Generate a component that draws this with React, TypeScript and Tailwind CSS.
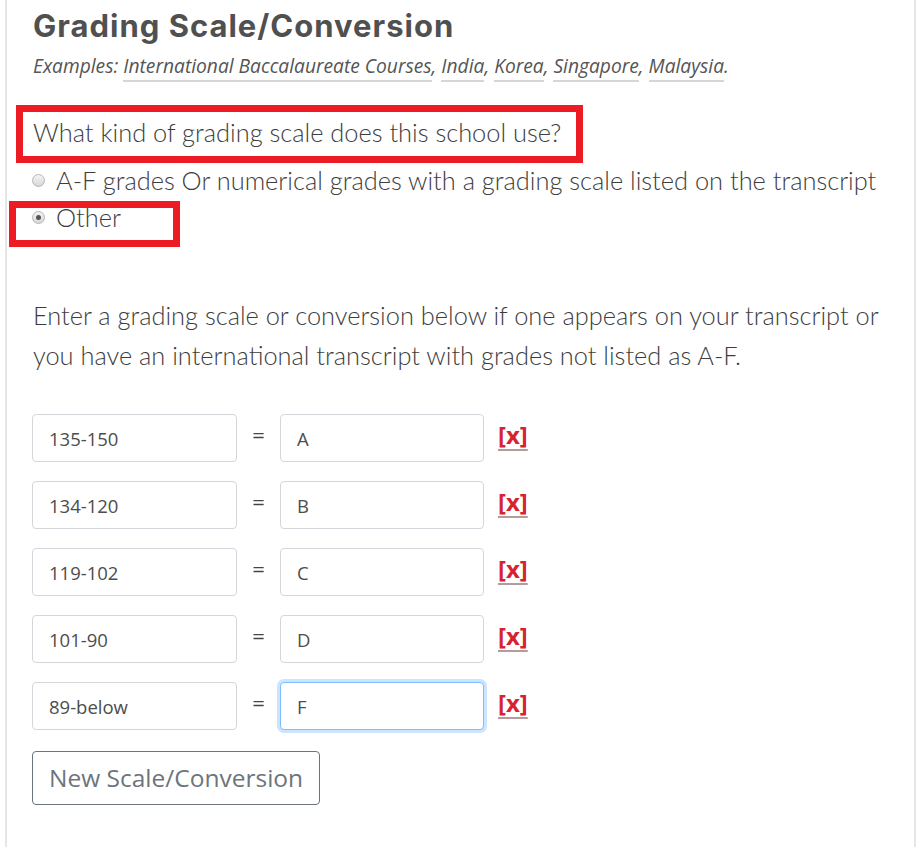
import { useState } from "react";

type ScaleRow = { id: number; range: string; grade: string };

const initialRows: ScaleRow[] = [
  { id: 1, range: "135-150", grade: "A" },
  { id: 2, range: "134-120", grade: "B" },
  { id: 3, range: "119-102", grade: "C" },
  { id: 4, range: "101-90", grade: "D" },
  { id: 5, range: "89-below", grade: "F" },
];

const examples = ["International Baccalaureate Courses", "India", "Korea", "Singapore", "Malaysia"];

function Radio({ checked }: { checked: boolean }) {
  return (
    <span className="inline-flex h-[13px] w-[13px] shrink-0 items-center justify-center rounded-full border border-[#b5b5b5] bg-gradient-to-b from-[#f4f4f4] to-[#d8d8d8]">
      {checked ? <span className="h-[5px] w-[5px] rounded-full bg-[#555]" /> : null}
    </span>
  );
}

export default function App() {
  const [rows] = useState(initialRows);
  const [choice, setChoice] = useState("other");

  return (
    <div className="min-h-[847px] bg-white" style={{ fontFamily: '"Open Sans", "Noto Sans", sans-serif' }}>
      <div className="relative ml-[5px] min-h-[847px] w-[911px] border-x-2 border-[#e6e6e6] pl-[26px] pt-2">
        <h2
          className="text-[31px] leading-[36px] font-bold tracking-[1px] text-[#505050]"
          style={{ fontFamily: "Inter, sans-serif" }}
        >
          Grading Scale/Conversion
        </h2>
        <p className="mt-[10px] text-[19.2px] leading-6 italic text-[#555]">
          Examples:{" "}
          {examples.map((ex, i) => (
            <span key={ex}>
              <a href="#" className="border-b-2 border-[#d6d6d6] pb-[1px]">
                {ex}
              </a>
              {i < examples.length - 1 ? ", " : "."}
            </span>
          ))}
        </p>

        <div className="font-light text-[#3d3d3d]" style={{ fontFamily: "Lato, sans-serif" }}>
          <p className="mt-[38px] text-[25.4px] leading-8">What kind of grading scale does this school use?</p>
          <div className="mt-[16px] flex flex-col gap-[5px] text-[25.4px] leading-8">
            <label className="-ml-[1px] flex items-center gap-[11px]" onClick={() => setChoice("af")}>
              <Radio checked={choice === "af"} />
              A-F grades Or numerical grades with a grading scale listed on the transcript
            </label>
            <label className="-ml-[1px] flex items-center gap-[11px]" onClick={() => setChoice("other")}>
              <Radio checked={choice === "other"} />
              Other
            </label>
          </div>

          <p className="mt-[62px] w-[870px] text-[25.4px] leading-[40px]">
            Enter a grading scale or conversion below if one appears on your transcript or you have an international
            transcript with grades not listed as A-F.
          </p>
        </div>

        <div className="-ml-[1px] mt-[39px] flex flex-col gap-[19px]">
          {rows.map((row) => (
            <div key={row.id} className="flex items-center">
              <input
                defaultValue={row.range}
                className="h-[48px] w-[205px] rounded-[4px] border border-[#d3d7db] bg-white pl-[16px] text-[18.5px] text-[#4d4d4d] outline-none"
              />
              <span className="mb-[8px] w-[43px] text-center text-[22px] text-[#444]">=</span>
              <input
                defaultValue={row.grade}
                className={
                  row.grade === "F"
                    ? "h-[48px] w-[204px] rounded-[4px] border border-[#80bdff] bg-white pl-[16px] text-[18.5px] text-[#4d4d4d] shadow-[0_0_0_3px_rgba(0,123,255,0.2)] outline-none"
                    : "h-[48px] w-[204px] rounded-[4px] border border-[#d3d7db] bg-white pl-[16px] text-[18.5px] text-[#4d4d4d] outline-none"
                }
              />
              <a
                href="#"
                className="mb-[6px] ml-[14px] text-[24px] leading-7 font-bold text-[#d7232e] underline decoration-[#b69a9c] decoration-2 underline-offset-[5px]"
              >
                [x]
              </a>
            </div>
          ))}
        </div>

        <button
          type="button"
          className="-ml-[1px] mt-[21px] box-border h-[54px] rounded-[4px] border border-[#6c757d] px-[16px] text-[24.5px] text-[#6c757d]"
        >
          New Scale/Conversion
        </button>

        <div className="pointer-events-none absolute left-[9px] top-[105px] h-[58px] w-[567px] border-[7px] border-[#ed1c24]" />
        <div className="pointer-events-none absolute left-[2px] top-[201px] h-[46px] w-[171px] border-[7px] border-[#ed1c24]" />
      </div>
    </div>
  );
}
